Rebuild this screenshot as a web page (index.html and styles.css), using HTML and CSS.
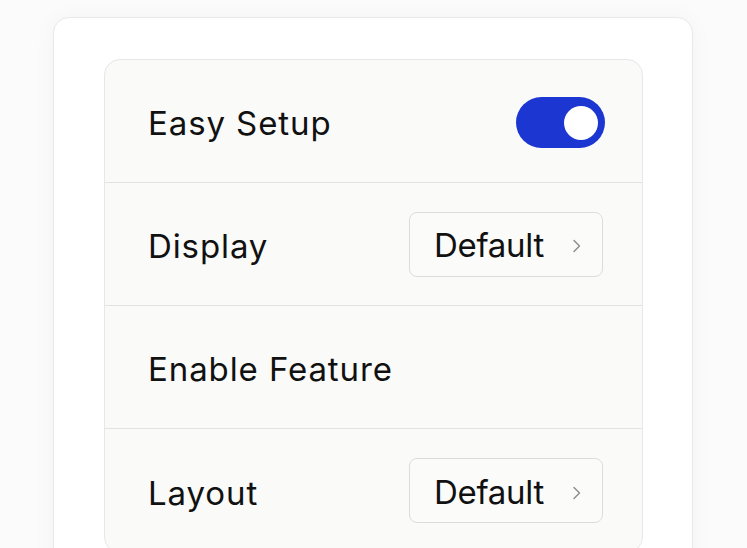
FILE: index.html
```html
<!DOCTYPE html>
<html lang="en">
<head>
    <meta charset="UTF-8">
    <meta name="viewport" content="width=device-width, initial-scale=1.0">
    <title>Settings</title>
    <link rel="stylesheet" href="styles.css">
</head>
<body>
    <div class="page">
        <div class="panel">
            <div class="settings">
                <!-- Easy Setup -->
                <div class="row">
                    <span class="label">Easy Setup</span>
                    <div class="toggle on"><div class="knob"></div></div>
                </div>

                <!-- Display -->
                <div class="row">
                    <span class="label">Display</span>
                    <button class="select">
                        <span>Default</span>
                        <svg class="chevron" width="10" height="16" viewBox="0 0 10 16"><path d="M2 2.5 L7.5 8 L2 13.5" fill="none" stroke="#8a8a8a" stroke-width="1.4" stroke-linecap="round" stroke-linejoin="round"/></svg>
                    </button>
                </div>

                <!-- Enable Feature -->
                <div class="row">
                    <span class="label">Enable Feature</span>
                </div>

                <!-- Layout -->
                <div class="row">
                    <span class="label">Layout</span>
                    <button class="select">
                        <span>Default</span>
                        <svg class="chevron" width="10" height="16" viewBox="0 0 10 16"><path d="M2 2.5 L7.5 8 L2 13.5" fill="none" stroke="#8a8a8a" stroke-width="1.4" stroke-linecap="round" stroke-linejoin="round"/></svg>
                    </button>
                </div>
            </div>
        </div>
    </div>
</body>
</html>
```

FILE: styles.css
```css
* {
    margin: 0;
    padding: 0;
    box-sizing: border-box;
}

body {
    background-color: #fbfbfb;
    font-family: Inter, "Noto Sans", sans-serif;
    color: #111;
    height: 548px;
    overflow: hidden;
}

.page {
    padding: 17px 0 0 53px;
}

/* Outer card */
.panel {
    width: 640px;
    min-height: 600px;
    background-color: #fff;
    border: 1px solid #e9e9e9;
    border-radius: 16px;
    box-shadow: 0 0 24px rgba(0, 0, 0, 0.035);
    padding: 41px 50px 0;
}

/* Settings list */
.settings {
    width: 539px;
    background-color: #fafaf9;
    border: 1px solid #e7e7e7;
    border-radius: 16px;
    overflow: hidden;
}

.row {
    display: flex;
    align-items: center;
    justify-content: space-between;
    height: 123px;
    padding: 0 37px 0 43px;
    border-bottom: 1px solid #e3e3e3;
}

.row:last-child {
    border-bottom: none;
}

.label {
    font-size: 33px;
    letter-spacing: 0.9px;
    padding-top: 4px;
}

/* Toggle switch */
.toggle {
    position: relative;
    width: 89px;
    height: 51px;
    margin-top: 3px;
    border-radius: 26px;
    background-color: #1b36d1;
}

.knob {
    position: absolute;
    top: 9px;
    right: 7px;
    width: 34px;
    height: 34px;
    border-radius: 50%;
    background-color: #fff;
}

/* Select button */
.select {
    display: flex;
    align-items: center;
    justify-content: space-between;
    width: 194px;
    height: 65px;
    margin-right: 2px;
    padding: 2px 20px 0 24px;
    background-color: #fbfbfa;
    border: 1px solid #dcdcdc;
    border-radius: 8px;
    font-family: inherit;
    font-size: 33px;
    letter-spacing: -0.3px;
    color: #111;
}

.chevron {
    margin-top: 2px;
}
```
